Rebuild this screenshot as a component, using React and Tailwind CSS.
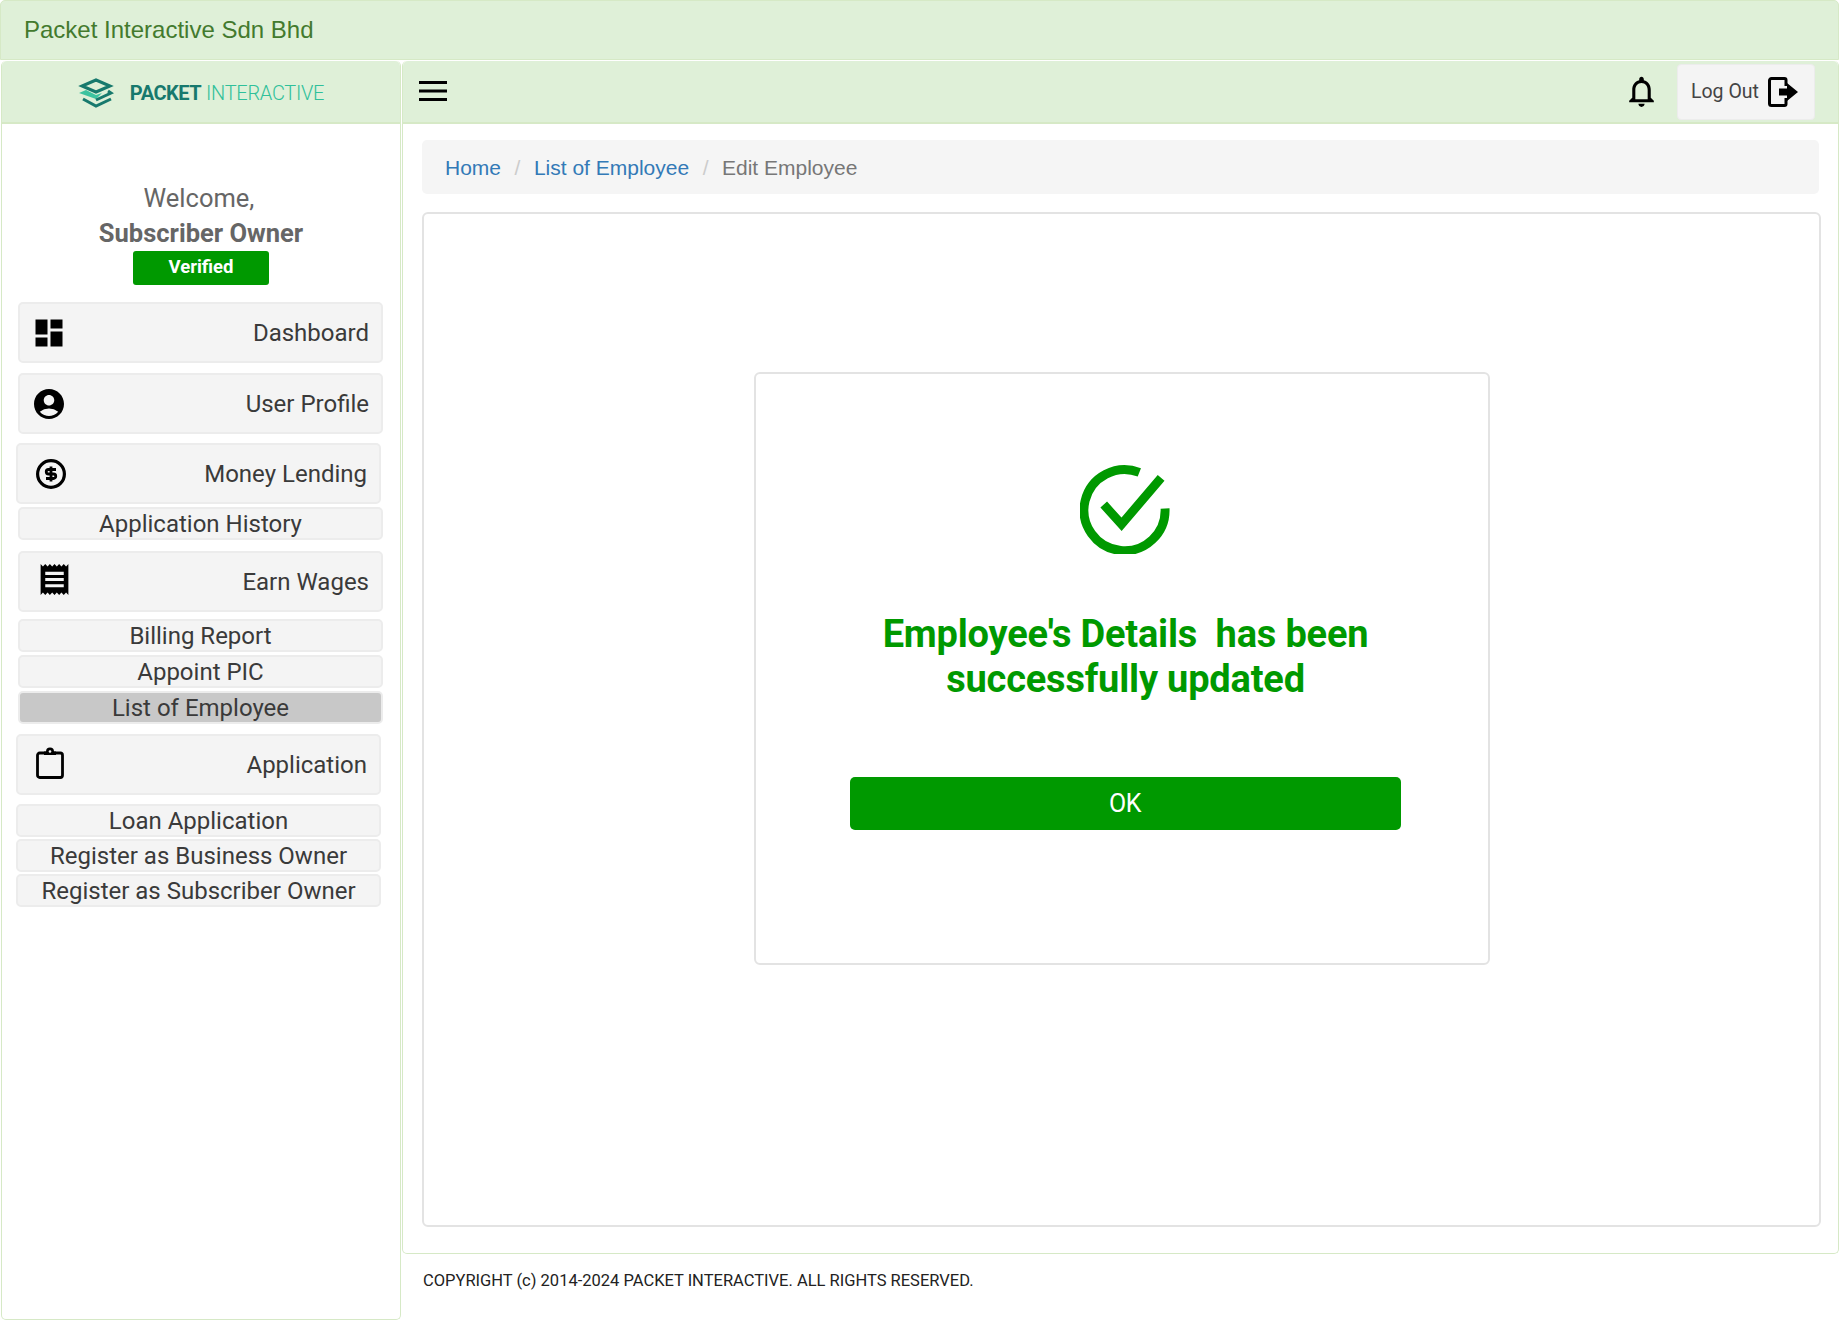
import React from "react";
import { MdDashboard, MdAccountCircle, MdReceipt, MdOutlineNotifications } from "react-icons/md";

const item = "flex items-center justify-between rounded-[5px] border-2 border-[#ececec] text-[24px] leading-none text-[#3a3a3a]";
const big = `${item} bg-[#f4f4f4] h-[61px] w-[365px] pr-[12px]`;
const small = `${item} bg-[#f4f4f4] h-[33px] w-[365px] justify-center`;
const active = `${item} bg-[#c8c8c8] h-[33px] w-[365px] justify-center`;

function Logo() {
  return (
    <div className="flex items-center">
      <svg width="36" height="30" viewBox="0 0 36 30" className="mr-[16px]">
        <path d="M18 2 L32 8 L18 14 L4 8 Z" fill="none" stroke="#17796d" strokeWidth="3" />
        <path d="M1 15 L8 12 L18 17 L24 15 L18 21 Z" fill="#3dc3a0" />
        <path d="M30 13 L33 15 L18 22" fill="none" stroke="#17796d" strokeWidth="3" />
        <path d="M5 21 L18 28 L33 21" fill="none" stroke="#17796d" strokeWidth="3" />
      </svg>
      <span className="font-['Roboto',sans-serif] text-[20px] font-bold tracking-[-0.5px] text-[#17796d]">PACKET</span>
      <span className="ml-[5px] font-['Roboto',sans-serif] text-[20px] font-light tracking-[-0.3px] text-[#2fc09a]">INTERACTIVE</span>
    </div>
  );
}

function Dollar() {
  return (
    <svg width="32" height="32" viewBox="0 0 32 32" className="block">
      <circle cx="16" cy="16" r="13.4" fill="none" stroke="#000" strokeWidth="3.2" />
      <path d="M21 11.5 H13.5 A2.2 2.2 0 0 0 13.5 16 H18.5 A2.2 2.2 0 0 1 18.5 20.5 H11 M16 8.5 V23.5" fill="none" stroke="#000" strokeWidth="2.8" />
    </svg>
  );
}

function Clipboard() {
  return (
    <svg width="28" height="32" viewBox="0 0 28 32" className="block">
      <rect x="1.5" y="6" width="25" height="24.5" rx="2.2" fill="none" stroke="#000" strokeWidth="2.8" />
      <path d="M8 4.5 H10 A4 4 0 0 1 18 4.5 H20 V8 H8 Z" fill="#000" />
      <circle cx="14" cy="4.5" r="1.3" fill="#f4f4f4" />
    </svg>
  );
}

function LogoutIcon() {
  return (
    <svg width="30" height="30" viewBox="0 0 30 30" className="block">
      <path d="M18 9 V3 A1.5 1.5 0 0 0 16.5 1.5 H3.5 A2 2 0 0 0 1.5 3.5 V26.5 A2 2 0 0 0 3.5 28.5 H16.5 A1.5 1.5 0 0 0 18 27 V21" fill="none" stroke="#000" strokeWidth="3" />
      <path d="M11 11.5 H19 V6 L30 15 L19 24 V18.5 H11 Z" fill="#000" />
    </svg>
  );
}

function Check() {
  return (
    <svg width="91" height="91" viewBox="0 0 92 92" className="block">
      <path d="M60 9.5 A41 41 0 1 0 86 46" fill="none" stroke="#009900" strokeWidth="9" />
      <path d="M24 42 L42 62 L82 15" fill="none" stroke="#009900" strokeWidth="9" />
    </svg>
  );
}

export default function App() {
  return (
    <div className="h-[1320px] w-[1839px] overflow-hidden bg-white font-['Roboto',sans-serif]">
      <div className="flex h-[60px] items-center rounded-t-[5px] border border-[#d6e9c6] bg-[#dff0d8] pl-[23px] font-['Liberation_Sans',sans-serif] text-[24px] text-[#437a2e]">
        Packet Interactive Sdn Bhd
      </div>
      <div className="flex h-[1260px]">
        <aside className="ml-[1px] mt-[1px] flex h-[1259px] w-[400px] flex-col rounded-[5px] border-[#d6e9c6] [border-style:solid] [border-width:0_1.5px_1.5px_1.5px]">
          <div className="flex h-[63px] shrink-0 items-center justify-center rounded-t-[5px] border-b-2 border-[#d6e9c6] bg-[#dff0d8] pt-[2px]">
            <Logo />
          </div>
          <div className="flex flex-col items-center pt-[57px] text-center text-[25.5px] leading-[35px] text-[#666]">
            <div className="mr-[4px]">Welcome,</div>
            <div className="font-bold">Subscriber Owner</div>
            <div className="mb-[17px] flex h-[34px] w-[136px] items-center justify-center rounded-[3px] bg-[#009900] pb-[1px] text-[18.5px] font-bold text-white">Verified</div>
          </div>
          <div className="flex flex-col pl-[16px]">
            <div className={big}>
              <MdDashboard size={36} className="ml-[11px]" color="#000" />
              <span>Dashboard</span>
            </div>
            <div className={`${big} mt-[10px]`}>
              <MdAccountCircle size={36} className="ml-[11px]" color="#000" />
              <span>User Profile</span>
            </div>
            <div className={`${big} -ml-[2px] mt-[9px]`}>
              <span className="ml-[17px]"><Dollar /></span>
              <span>Money Lending</span>
            </div>
            <div className={`${small} mt-[3px]`}>Application History</div>
            <div className={`${big} mt-[11px]`}>
              <MdReceipt size={37} className="-mt-[5px] ml-[16px]" color="#000" />
              <span>Earn Wages</span>
            </div>
            <div className={`${small} mt-[7px]`}>Billing Report</div>
            <div className={`${small} mt-[3px]`}>Appoint PIC</div>
            <div className={`${active} mt-[3px]`}>List of Employee</div>
            <div className={`${big} -ml-[2px] mt-[10px]`}>
              <span className="-mt-[3px] ml-[18px]"><Clipboard /></span>
              <span>Application</span>
            </div>
            <div className={`${small} -ml-[2px] mt-[9px]`}>Loan Application</div>
            <div className={`${small} -ml-[2px] mt-[2px]`}>Register as Business Owner</div>
            <div className={`${small} -ml-[2px] mt-[2px]`}>Register as Subscriber Owner</div>
          </div>
        </aside>
        <div className="ml-[1px] flex min-w-0 flex-1 flex-col">
          <main className="mt-[1px] flex h-[1193px] flex-col rounded-[5px] border-[#d6e9c6] [border-style:solid] [border-width:0_1.5px_1.5px_1.5px]">
            <header className="flex h-[63px] shrink-0 items-center rounded-t-[5px] border-b-2 border-[#d6e9c6] bg-[#dff0d8] pl-[15px] pr-[23px]">
              <svg width="30" height="30" viewBox="0 0 30 30" className="-mt-[2px] block">
                <path d="M1 6.5 H29 M1 15 H29 M1 23.5 H29" stroke="#000" strokeWidth="3" />
              </svg>
              <MdOutlineNotifications size={37} color="#000" className="ml-auto mr-[17px]" />
              <div className="flex h-[56px] w-[138px] items-center rounded-[4px] border border-[#ececec] bg-[#f4f4f4] pl-[13px] text-[19.5px] text-[#444]">
                Log Out
                <span className="ml-[9px]"><LogoutIcon /></span>
              </div>
            </header>
            <div className="flex-1 px-[19px] pt-[16px]">
              <nav className="flex h-[54px] w-[1397px] items-center rounded-[5px] bg-[#f5f5f5] pl-[23px] pt-[1px] font-['Liberation_Sans',sans-serif] text-[21px] text-[#777]">
                <span className="text-[#337ab7]">Home</span>
                <span className="mx-[13.5px] text-[#ccc]">/</span>
                <span className="text-[#337ab7]">List of Employee</span>
                <span className="mx-[13.5px] text-[#ccc]">/</span>
                <span>Edit Employee</span>
              </nav>
              <section className="mt-[18px] flex h-[1015px] w-[1399px] flex-col items-center rounded-[6px] border-2 border-[#e3e3e3] pt-[158px]">
                <div className="flex h-[593px] w-[736px] flex-col items-center rounded-[6px] border-2 border-[#e3e3e3] pt-[89px]">
                  <div className="ml-[7px]"><Check /></div>
                  <h2 className="ml-[8px] mt-[58px] w-[560px] whitespace-pre text-center text-[38px] font-bold leading-[45px] tracking-[-0.2px] text-[#009900]">{"Employee's Details  has been\nsuccessfully updated"}</h2>
                  <button className="ml-[7px] mt-[75px] h-[53px] w-[551px] rounded-[5px] bg-[#009900] text-[25px] tracking-[-0.5px] text-white">OK</button>
                </div>
              </section>
            </div>
          </main>
          <footer className="pl-[21px] pt-[15px] text-[16.5px] text-[#222]">COPYRIGHT (c) 2014-2024 PACKET INTERACTIVE. ALL RIGHTS RESERVED.</footer>
        </div>
      </div>
    </div>
  );
}
